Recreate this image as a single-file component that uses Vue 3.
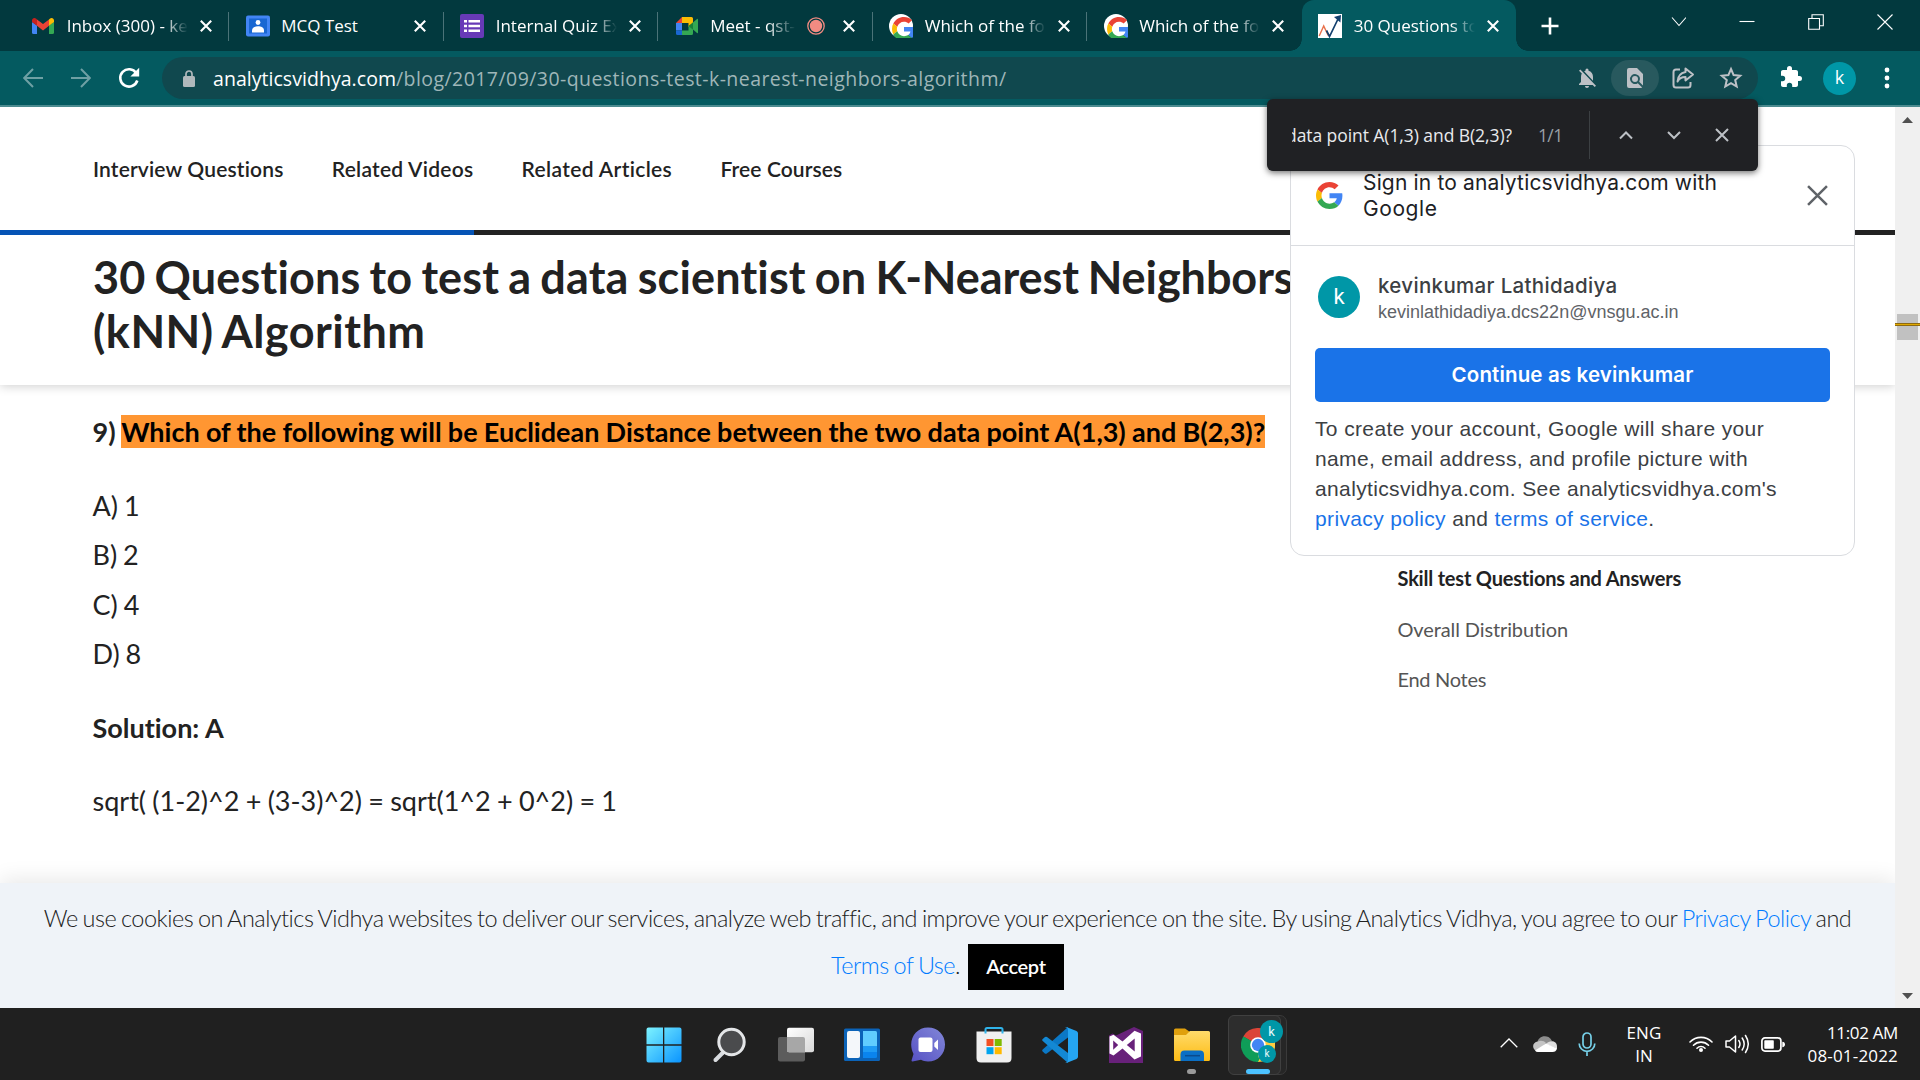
<script setup>
const googleG = '<svg viewBox="0 0 48 48"><path fill="#EA4335" d="M24 9.5c3.54 0 6.71 1.22 9.21 3.6l6.85-6.85C35.9 2.38 30.47 0 24 0 14.62 0 6.51 5.38 2.56 13.22l7.98 6.19C12.43 13.72 17.74 9.5 24 9.5z"/><path fill="#4285F4" d="M46.98 24.55c0-1.57-.15-3.09-.38-4.55H24v9.02h12.94c-.58 2.96-2.26 5.48-4.78 7.18l7.73 6c4.51-4.18 7.09-10.36 7.09-17.65z"/><path fill="#FBBC05" d="M10.53 28.59c-.48-1.45-.76-2.99-.76-4.59s.27-3.14.76-4.59l-7.98-6.19C.92 16.46 0 20.12 0 24c0 3.88.92 7.54 2.56 10.78l7.97-6.19z"/><path fill="#34A853" d="M24 48c6.48 0 11.93-2.13 15.89-5.81l-7.73-6c-2.15 1.45-4.92 2.3-8.16 2.3-6.26 0-11.57-4.22-13.47-9.91l-7.98 6.19C6.51 42.62 14.62 48 24 48z"/></svg>'
const googleTab = '<svg viewBox="0 0 24 24"><circle cx="12" cy="12" r="12" fill="#fff"/><svg x="3" y="3" width="18" height="18" viewBox="0 0 48 48">' + googleG.replace(/^<svg[^>]*>|<\/svg>$/g, '') + '</svg></svg>'
const gmail = '<svg viewBox="0 0 24 24"><path fill="#4285f4" d="M1 8v10.500q0 1.500 1.500 1.500H6v-8.500z"/><path fill="#34a853" d="M23 8v10.500q0 1.500-1.500 1.500H18v-8.500z"/><path fill="#ea4335" d="M6 5.500l6 4.600 6-4.600v6.200l-6 4.700-6-4.700z"/><path fill="#c5221f" d="M1 9V6.500C1 4 3.600 3.200 5.200 4.700L6 5.500v6.300L1 8z"/><path fill="#fbbc04" d="M23 9V6.500c0-2.500-2.600-3.300-4.200-1.800l-.8.800v6.300L23 8z"/></svg>'
const classroom = '<svg viewBox="0 0 24 24"><rect y="1.500" width="24" height="21" rx="2" fill="#4285f4"/><rect x="3" y="4.500" width="18" height="15" fill="#1967d2"/><circle cx="12" cy="8.500" r="2.400" fill="#fff"/><path fill="#fff" d="M6 18.500v-2c0-3 3-4.300 6-4.300s6 1.300 6 4.300v2z"/></svg>'
const forms = '<svg viewBox="0 0 24 24"><rect width="24" height="24" rx="2" fill="#673ab7"/><path stroke="#fff" stroke-width="2.600" d="M4 7.200h3M8.500 7.200H20M4 12h3M8.500 12H20M4 16.800h3M8.500 16.800H20"/></svg>'
const meet = '<svg viewBox="0 0 24 24"><path fill="#ea4335" d="M7 3L1 9h6z"/><path fill="#fbbc04" d="M7 3h9.500Q18 3 18 4.500V11l-4.500 2V9H7z"/><path fill="#4285f4" d="M1 9h6v7.500H1z"/><path fill="#1967d2" d="M1 16.500h6V21H2.500Q1 21 1 19.500z"/><path fill="#34a853" d="M7 16.500h6.500v-4L18 9.500v10q0 1.500-1.500 1.500H7z"/><path fill="#188038" d="M13.500 12L18 8.300v7.500z"/><path fill="#34a853" d="M18 8.500L22 5q1-.7 1 .5v13q0 1.200-1 .5l-4-3.500z"/></svg>'
const analytics = '<svg viewBox="0 0 24 24"><rect width="24" height="24" fill="#fff"/><path fill="none" stroke="#e8704a" stroke-width="1.400" d="M1.200 22L5.700 12l4.500 9.500"/><path fill="none" stroke="#123f6d" stroke-width="1.700" d="M8.500 16.500l3 6L20.500 4"/><path fill="#123f6d" d="M16 3L23 1l-.6 7.500z"/></svg>'

const tabs = [
  { icon: gmail, title: 'Inbox (300) - ke' },
  { icon: classroom, title: 'MCQ Test' },
  { icon: forms, title: 'Internal Quiz Ex' },
  { icon: meet, title: 'Meet - qst-', recording: true },
  { icon: googleTab, title: 'Which of the fo' },
  { icon: googleTab, title: 'Which of the fo' },
  { icon: analytics, title: '30 Questions to', active: true },
]
const navLinks = [
  ['Interview Questions', 190.5],
  ['Related Videos', 141.5],
  ['Related Articles', 150.5],
  ['Free Courses', 122],
]
const answers = ['A) 1', 'B) 2', 'C) 4', 'D) 8']

const taskIcons = [
  '<svg viewBox="0 0 36 36"><defs><linearGradient id="win" x1="0" y1="0" x2="1" y2="1"><stop offset="0" stop-color="#7df3ff"/><stop offset="1" stop-color="#0a94ff"/></linearGradient></defs><path fill="url(#win)" d="M2.500.500H17V17.200H.500V2.500q0-2 2-2zM18.300.500H33.500q2 0 2 2V17.200H18.300zM.500 18.700H17V35.500H2.500q-2 0-2-2zM18.300 18.700H35.500V33.500q0 2-2 2H18.300z"/></svg>',
  '<svg viewBox="0 0 36 36"><path stroke="#d9dce0" stroke-width="4" stroke-linecap="round" d="M10.500 26L3.500 33"/><circle cx="19.500" cy="15" r="12.700" fill="#4a4b4d" stroke="#e4e6e8" stroke-width="3"/></svg>',
  '<svg viewBox="0 0 36 36"><defs><linearGradient id="tv" x1="0" y1="0" x2="1" y2="1"><stop offset="0" stop-color="#fff"/><stop offset="1" stop-color="#d8d8d8"/></linearGradient></defs><rect x="0" y="10" width="27" height="24.500" rx="2" fill="#5c5c5c"/><rect x="9" y=".800" width="27" height="24.500" rx="2" fill="url(#tv)"/><path fill="#a7a7a7" d="M9 10h16q2 0 2 2v13.300H11q-2 0-2-2z"/></svg>',
  '<svg viewBox="0 0 36 36"><rect y="1.500" width="36" height="32.500" rx="1.500" fill="#0b63b8"/><rect x="3" y="4" width="13" height="27" rx="2" fill="#f4f7fa"/><path fill="#60cdff" d="M19 4h12.500q1.500 0 1.500 1.500V19H19z"/><path fill="#1e9bf5" d="M19 19h14v6H19z"/><path fill="#0a84ee" d="M19 25h14v4.500q0 1.500-1.500 1.500H19z"/></svg>',
  '<svg viewBox="0 0 36 36"><defs><linearGradient id="chat" x1="1" y1="0" x2="0" y2="1"><stop offset="0" stop-color="#8287d8"/><stop offset="1" stop-color="#5752c4"/></linearGradient></defs><path fill="url(#chat)" d="M18 .500C28 .500 35 8 35 17.500S28 34.500 18 34.500c-3 0-5-.500-7-1.700L2.500 34.500q-1 0-1-1L3.500 27C-3 14 5 .500 18 .500z"/><rect x="8.500" y="10.500" width="14" height="14.500" rx="2" fill="#fff"/><path fill="#fff" d="M24.300 16L28 12.600V23l-3.700-3.500z"/></svg>',
  '<svg viewBox="0 0 36 36"><path fill="#f0f0f0" d="M.500 4.500h35V31q0 4.500-4.500 4.500H5Q.500 35.500.500 31z"/><path fill="none" stroke="#2fb3ea" stroke-width="2" d="M9.500 6.500V2.500q0-1.500 1.500-1.500H25q1.500 0 1.500 1.500V6.500"/><path fill="#f25022" d="M10.500 12h7v7h-7z"/><path fill="#7fba00" d="M18.700 12h7v7h-7z"/><path fill="#00a4ef" d="M10.500 20.200h7v7h-7z"/><path fill="#ffb900" d="M18.700 20.200h7v7h-7z"/></svg>',
  '<svg viewBox="0 0 36 36"><path fill="#0b78c6" d="M26 0v10.500L4.800 26.500q-1 .700-2 0L.700 24.500q-1-1 0-2z"/><path fill="#1388d4" d="M.700 12L3 10q1-.700 2 0L26 26v10L.700 14q-1-1 0-2z"/><path fill="#25a5f2" d="M25 .300L34.500 4Q36 4.800 36 6.300V29.700q0 1.500-1.500 2.200L25 35.700q-1 .300-2-.700 3 1 3-2V3q0-3-3-2 1-1 2-.700z"/></svg>',
  '<svg viewBox="0 0 36 36"><path fill="#68217a" d="M1 8.500L4.500 6.500 8 8.500 26 0l9 4v32H1z"/><path fill="#fff" fill-rule="evenodd" d="M26.500 3.800L33 6.500V29.500L26.500 32.500 14.500 21.500 5.500 28.500 1.500 26.500V9.500L5.500 7.700 14.500 14.600zM26.700 11.500L18.800 18l7.900 6.500zM5.200 13.500v9.200L10.200 18z"/></svg>',
  '<svg viewBox="0 0 36 36"><path fill="#e0a00d" d="M0 3q0-1.500 1.500-1.500H11L16 5v6H0z"/><defs><linearGradient id="fold" x1="0" y1="0" x2="0" y2="1"><stop offset="0" stop-color="#ffdb6b"/><stop offset="1" stop-color="#fdbc14"/></linearGradient></defs><path fill="url(#fold)" d="M0 8H12L16 4H34.500Q36 4 36 5.500V32.500Q36 34 34.500 34H1.500Q0 34 0 32.500z"/><path fill="#0b6fc4" d="M6.500 34V27.500q0-4 4-4H26q4 0 4 4V34z"/><path stroke="#0a4a8c" stroke-width="1.500" d="M11 28.700H26"/></svg>',
]

// Spreads letters so a label takes up the given width in pixels;
// with the .words modifier only the word gaps are adjusted.
const vFit = {
  mounted(el, { value, modifiers }) {
    const diff = value - el.getBoundingClientRect().width
    const text = el.textContent
    if (modifiers.words) el.style.wordSpacing = diff / (text.split(' ').length - 1) + 'px'
    else el.style.letterSpacing = diff / text.length + 'px'
  },
}
</script>

<template>
  <div class="screen">
    <header class="tabstrip">
      <div class="tabs">
        <div v-for="(t, i) in tabs" :key="i" class="tab" :class="{ active: t.active, last: i === 5 }">
          <span class="favicon" v-html="t.icon"></span>
          <span class="title" :class="{ short: t.recording, faded: t.title !== 'MCQ Test' }">{{ t.title }}</span>
          <svg v-if="t.recording" class="rec" viewBox="0 0 18 18"><circle cx="9" cy="9" r="8.200" fill="none" stroke="#f28b82" stroke-width="1.300" /><circle cx="9" cy="9" r="6.200" fill="#f28b82" /></svg>
          <svg class="close" viewBox="0 0 12 12"><path d="M.8.8l10.400 10.400M11.200.8L.8 11.200" stroke="#fff" stroke-width="2.100" /></svg>
        </div>
      </div>
      <svg class="plus" viewBox="0 0 18 18"><path d="M9 .5v17M.5 9h17" stroke="#fff" stroke-width="2.600" /></svg>
      <div class="controls">
        <svg viewBox="0 0 16 16"><path d="M2 3.500l7 8 7-8" /></svg>
        <svg viewBox="0 0 16 16"><path d="M.5 7.500h15" /></svg>
        <svg viewBox="0 0 16 16"><path d="M.7 4.500h10.800v10.800H.7zM4 4.500V.7h11.300v11H11.500" /></svg>
        <svg viewBox="0 0 16 16"><path d="M.5.5l15 15M15.500.5l-15 15" /></svg>
      </div>
    </header>

    <div class="toolbar">
      <svg class="nav-ic back" viewBox="0 0 20 20"><path d="M20 10H1.500M10 1L1.200 10l8.800 9" fill="none" stroke="#6fa0a4" stroke-width="2" /></svg>
      <svg class="nav-ic fwd" viewBox="0 0 20 20"><path d="M0 10h18.500M10 1l8.800 9L10 19" fill="none" stroke="#6fa0a4" stroke-width="2" /></svg>
      <svg class="reload" viewBox="0 0 22 22"><path d="M18.300 6.200A8.700 8.700 0 1 0 19.300 13.500" fill="none" stroke="#fff" stroke-width="2.600" /><path d="M21.200.8v8.800h-8.800z" fill="#fff" /></svg>
      <div class="omnibox">
        <svg class="lock" viewBox="0 0 12 17"><rect y="6" width="12" height="11" rx="1.500" fill="#b0b8bb" /><path d="M3 7V4a3 3 0 0 1 6 0v3" fill="none" stroke="#b0b8bb" stroke-width="1.700" /></svg>
        <span v-fit="183" class="domain">analyticsvidhya.com</span><span v-fit="610.500" class="path">/blog/2017/09/30-questions-test-k-nearest-neighbors-algorithm/</span>
        <div class="omni-icons">
          <svg viewBox="0 0 24 24" class="oi bell"><path fill="#bdc1c6" d="M20 18.700L7.800 6.100 5.300 3.500 4 4.800l2.800 2.800C6.300 8.600 6 9.700 6 11v5l-2 2v1h13.700l2 2 1.300-1.300zM12 22c1.100 0 2-.9 2-2h-4c0 1.100.9 2 2 2zm6-7.300V11c0-3.100-1.600-5.600-4.500-6.300V4a1.500 1.500 0 0 0-3 0v.700c-.5.100-1 .3-1.400.5z" /></svg>
          <span class="oi-chip"><svg viewBox="0 0 24 24" class="oi"><path fill="#bdc1c6" fill-rule="evenodd" d="M6 2h8l6 6v11.600l-3.800-3.800a5 5 0 1 0-1.400 1.400L19.200 21.600Q18.800 22 18 22H6q-2 0-2-2V4q0-2 2-2zM12 10a3 3 0 1 1 0 6 3 3 0 1 1 0-6z" /></svg></span>
          <svg viewBox="0 0 24 24" class="oi share"><path fill="none" stroke="#bdc1c6" stroke-width="2" stroke-linejoin="round" d="M9 3.500H5Q2.500 3.500 2.500 6v13Q2.500 21.500 5 21.500H17Q19.500 21.500 19.500 19V16M14.500 2.500L22 8.500l-7.500 6v-3.500c-4 0-6.500 1.500-8 4.500.3-5 3-8.500 8-9.500z" /></svg>
          <svg viewBox="0 0 24 24" class="oi star"><path fill="none" stroke="#bdc1c6" stroke-width="2" d="M12 3l2.600 6.100 6.600.6-5 4.300 1.500 6.500-5.700-3.400-5.700 3.400L7.800 14l-5-4.300 6.600-.6z" /></svg>
        </div>
      </div>
      <svg class="puzzle" viewBox="0 0 24 24"><path fill="#fff" d="M20.500 11H19V7c0-1.100-.9-2-2-2h-4V3.500a2.500 2.500 0 0 0-5 0V5H4c-1.100 0-2 .9-2 2v3.800h1.500a2.700 2.700 0 0 1 0 5.400H2V20c0 1.100.9 2 2 2h3.800v-1.500a2.700 2.700 0 0 1 5.400 0V22H17c1.100 0 2-.9 2-2v-4h1.500a2.500 2.500 0 0 0 0-5z" /></svg>
      <span class="profile">k</span>
      <svg class="menu" viewBox="0 0 6 22"><g fill="#fff"><circle cx="3" cy="3" r="2.400" /><circle cx="3" cy="11" r="2.400" /><circle cx="3" cy="19" r="2.400" /></g></svg>
    </div>

    <div class="viewport">
      <div class="page">
        <div class="page-head">
          <nav><span v-for="n in navLinks" :key="n[0]" v-fit="n[1]">{{ n[0] }}</span></nav>
          <div class="progress"><i></i></div>
          <h1><span v-fit="782.500">30 Questions to test a data scientist on </span><span v-fit="418">K-Nearest Neighbors</span><br /><span v-fit="332.500">(kNN) Algorithm</span></h1>
        </div>
        <div class="content">
          <article>
            <p><b><span v-fit.words="28.500">9) </span><mark v-fit.words="1144">Which of the following will be Euclidean Distance between the two data point A(1,3) and B(2,3)?</mark></b></p>
            <p class="answers"><template v-for="a in answers" :key="a">{{ a }}<br /></template></p>
            <p><b>Solution: A</b></p>
            <p><span v-fit.words="524.500">sqrt( (1-2)^2 + (3-3)^2) = sqrt(1^2 + 0^2) = 1</span></p>
          </article>
          <aside>
            <div class="on"><span v-fit="283.500">Skill test Questions and Answers</span></div>
            <div><span v-fit="170.500">Overall Distribution</span></div>
            <div><span v-fit="88.500">End Notes</span></div>
          </aside>
        </div>
        <div class="cookies">
          <div class="line"><span v-fit="1807.500">We use cookies on Analytics Vidhya websites to deliver our services, analyze web traffic, and improve your experience on the site. By using Analytics Vidhya, you agree to our <a>Privacy Policy</a> and</span></div>
          <div class="line"><a v-fit="124">Terms of Use</a>. <button><span v-fit="59.500">Accept</span></button></div>
        </div>
      </div>
      <div class="scrollbar">
        <svg viewBox="0 0 11 6"><path fill="#505050" d="M0 6L5.500 0 11 6z" /></svg>
        <div class="track"><div class="thumb"></div><div class="hit"></div></div>
        <svg viewBox="0 0 11 6"><path fill="#505050" d="M0 0h11L5.500 6z" /></svg>
      </div>

      <section class="signin">
        <div class="si-head">
          <span class="glogo" v-html="googleG"></span>
          <div class="si-title"><span v-fit="354">Sign in to analyticsvidhya.com with</span><br /><span v-fit="74.500">Google</span></div>
          <svg class="si-close" viewBox="0 0 20 20"><path d="M1 1l18 18M19 1L1 19" stroke="#5f6368" stroke-width="2.400" /></svg>
        </div>
        <div class="account">
          <span class="avatar">k</span>
          <div><div class="name"><span v-fit="239.500">kevinkumar Lathidadiya</span></div><div class="mail"><span v-fit="300.500">kevinlathidadiya.dcs22n@vnsgu.ac.in</span></div></div>
        </div>
        <div class="continue"><span v-fit="242">Continue as kevinkumar</span></div>
        <div class="legal">
          <span v-fit="449">To create your account, Google will share your</span><br />
          <span v-fit="433">name, email address, and profile picture with</span><br />
          <span v-fit="462">analyticsvidhya.com. See analyticsvidhya.com's</span><br />
          <span v-fit="339.500"><a>privacy policy</a> and <a>terms of service</a>.</span>
        </div>
      </section>

      <div class="findbar">
        <div class="query"><span v-fit="226">data point A(1,3) and B(2,3)?</span></div>
        <span class="count"><span v-fit="24.500">1/1</span></span>
        <i></i>
        <svg viewBox="0 0 14 14"><path d="M1 10.500l6-6 6 6" /></svg>
        <svg viewBox="0 0 14 14"><path d="M1 4l6 6 6-6" /></svg>
        <svg viewBox="0 0 14 14"><path d="M1 1l12 12M13 1L1 13" /></svg>
      </div>
    </div>

    <footer class="taskbar">
      <div class="apps">
        <div v-for="(s, i) in taskIcons" :key="i" class="app"><span class="app-icon" v-html="s"></span><i v-if="i === 8" class="dot"></i></div>
        <div class="app">
          <div class="tile-back"></div>
          <div class="tile">
            <svg class="chrome" viewBox="0 0 48 48"><path fill="#db4437" d="M24 24L3.200 12A24 24 0 0 1 44.800 12z" /><path fill="#0f9d58" d="M24 24L24 48A24 24 0 0 1 3.200 12z" /><path fill="#ffcd40" d="M24 24L44.800 12A24 24 0 0 1 24 48z" /><path fill="#db4437" d="M24 13H45.300L44 11H24z" /><path fill="#0f9d58" d="M14.500 29.500L3.200 12l12 7zM33.500 29.500L24 48h-3l8-15z" /><circle cx="24" cy="24" r="11" fill="#fff" /><circle cx="24" cy="24" r="8.700" fill="#4285f4" /></svg>
            <span class="badge big">k</span><span class="badge small">k</span><i class="bar"></i>
          </div>
        </div>
      </div>
      <div class="tray">
        <svg class="t-up" viewBox="0 0 18 10"><path d="M.7 9.300L9 1l8.300 8.300" fill="none" stroke="#fff" stroke-width="1.300" /></svg>
        <svg class="t-cloud" viewBox="0 0 24 16"><path fill="#8d8d8d" d="M4 8A7.800 7.800 0 0 1 19 5L13 11z" /><path fill="#c4c4c4" d="M5 5.500C8 4 11 5 13 7L5 15.500C-1.500 14.500-1.500 6 5 5.500z" /><path fill="#dedede" d="M13 8C17 3.500 24 5 24 10.500V13z" /><path fill="#fff" d="M2 14.500L13 7.500l11 5Q23 16 19.500 16H5Q3 16 2 14.500z" /></svg>
        <svg class="t-mic" viewBox="0 0 18 24"><rect x="5" y="1" width="8" height="15" rx="4" fill="none" stroke="#76d0e8" stroke-width="1.700" /><path d="M1.200 11.500a7.800 7.800 0 0 0 15.600 0M9 19.500V24" fill="none" stroke="#76d0e8" stroke-width="1.700" /></svg>
        <div class="lang"><span v-fit="35">ENG</span><br /><span>IN</span></div>
        <svg class="t-wifi" viewBox="0 0 24 17"><g fill="none" stroke="#fff" stroke-width="1.600" stroke-linecap="round"><path d="M1 7a15.500 15.500 0 0 1 22 0M4.500 10.200a10.600 10.600 0 0 1 15 0M8 13.200a5.700 5.700 0 0 1 8 0" /></g><circle cx="12" cy="15" r="2" fill="#fff" /></svg>
        <svg class="t-vol" viewBox="0 0 24 20"><g fill="none" stroke="#fff" stroke-width="1.500" stroke-linecap="round" stroke-linejoin="round"><path d="M1 7h3.500L10.500 2v16L4.500 13H1zM13.800 6.500q2.400 3.500 0 7M17.200 4q4 6 0 12M20.500 1.500q5.500 8.500 0 17" /></g></svg>
        <svg class="t-bat" viewBox="0 0 24 15"><rect x=".9" y=".9" width="19" height="13.200" rx="3" fill="none" stroke="#fff" stroke-width="1.700" /><rect x="3.300" y="3.300" width="9.500" height="8.400" rx=".8" fill="#fff" /><path d="M21.300 4.800q2.700.3 2.700 2.700t-2.700 2.700z" fill="#fff" /></svg>
        <div class="clock"><span v-fit="71">11:02 AM</span><br /><span v-fit="90.500">08-01-2022</span></div>
      </div>
    </footer>
  </div>
</template>

<style>
body { margin: 0; overflow: hidden; background: #fff; }
.favicon svg, .glogo svg, .app-icon svg { display: block; width: 100%; height: 100%; }
</style>

<style scoped>
.screen { width: 1920px; height: 1080px; display: flex; flex-direction: column; overflow: hidden; font-family: "Open Sans", sans-serif; }
.screen svg { flex: none; display: block; }
.screen span { white-space: pre; }

.tabstrip { height: 51px; background: #02393e; display: flex; flex: none; }
.tabs { display: flex; padding-left: 14.500px; }
.tab { position: relative; width: 214.500px; height: 51px; box-sizing: border-box; padding: 0 17.500px 0 16.700px; display: flex; align-items: center; color: #fff; font-size: 17px; }
.tab::after { content: ""; position: absolute; right: 0; top: 12px; width: 1px; height: 29px; background: #4b7378; }
.tab.last::after { display: none; }
.tab.active { background: #045a60; border-radius: 12px 12px 0 0; }
.tab.active::before { content: ""; position: absolute; left: -12px; bottom: 0; width: 12px; height: 12px; background: radial-gradient(circle at 0 0, transparent 11.500px, #045a60 12px); }
.tab.active::after { left: 100%; right: auto; top: auto; bottom: 0; width: 12px; height: 12px; background: radial-gradient(circle at 100% 0, transparent 11.500px, #045a60 12px); }
.favicon { width: 24px; height: 24px; flex: none; }
.title { margin-left: 11.500px; width: 121px; height: 26px; line-height: 26px; flex: none; }
.title.faded { -webkit-mask-image: linear-gradient(90deg, #000 80%, transparent 100%); mask-image: linear-gradient(90deg, #000 80%, transparent 100%); }
.title.short { width: 86px; margin-right: 10.500px; -webkit-mask-image: linear-gradient(90deg, #000 66%, transparent 100%); mask-image: linear-gradient(90deg, #000 66%, transparent 100%); }
.rec { width: 18px; height: 18px; }
.close { width: 12px; height: 12px; margin-left: auto; }
.plus { width: 18px; height: 18px; margin: 17px 0 0 24.500px; }
.controls { margin-left: auto; padding: 14px 27px 0 0; display: flex; gap: 53px; }
.controls svg { width: 16px; height: 16px; fill: none; stroke: #fff; stroke-width: 1.100; }

.toolbar { height: 54px; border-bottom: 2px solid #4c8b90; background: #045a60; display: flex; flex: none; align-items: center; }
.nav-ic { width: 20px; height: 20px; }
.back { margin-left: 23px; }
.fwd { margin-left: 28px; }
.reload { width: 22px; height: 22px; margin-left: 27px; }
.omnibox { margin-left: 22px; width: 1596px; height: 42px; border-radius: 21px; background: #10484e; display: flex; align-items: center; font-size: 19.500px; box-sizing: border-box; padding-left: 21px; }
.lock { width: 12px; height: 17px; margin-right: 18px; }
.domain { color: #fff; }
.path { color: #9fb6b8; }
.omni-icons { margin-left: auto; display: flex; align-items: center; padding-right: 15px; }
.oi { width: 24px; height: 24px; }
.bell { margin-right: 12px; }
.oi-chip { width: 48px; height: 36px; border-radius: 18px; background: #28595e; display: flex; align-items: center; justify-content: center; }
.share { margin-left: 12px; }
.star { margin-left: 24px; }
.puzzle { width: 24px; height: 24px; margin-left: 21px; margin-top: -2px; }
.profile { width: 33px; height: 33px; line-height: 31px; margin-left: 20px; border-radius: 50%; background: #0097a7; color: #fff; text-align: center; font-size: 18px; }
.menu { width: 6px; height: 22px; margin-left: 28px; }

.viewport { position: relative; flex: none; height: 901px; display: flex; }
.page { width: 1895px; display: flex; flex-direction: column; font-family: Lato, sans-serif; color: #222; background: #fff; font-variant-ligatures: no-common-ligatures; }
.page-head { height: 278px; flex: none; box-shadow: 0 1px 10px rgba(0, 0, 0, .2); position: relative; background: #fff; clip-path: inset(0 0 -14px 0); }
nav { height: 123px; box-sizing: border-box; padding: 48px 0 0 93px; display: flex; gap: 48.300px; font-size: 21px; line-height: 28px; font-weight: 600; white-space: nowrap; }
.progress { height: 5px; background: #222; }
.progress i { display: block; width: 474px; height: 5px; background: #0654b5; }
h1 { margin: 0; padding: 15px 0 0 93px; font-size: 45px; line-height: 54px; font-weight: 700; white-space: nowrap; word-spacing: -2px; }
.content { display: flex; flex: 1; font-size: 27px; line-height: 49.500px; }
article { padding: 22px 0 0 92.500px; width: 1397.500px; flex: none; box-sizing: border-box; white-space: nowrap; }
article p { margin: 0 0 24px; }
.answers { word-spacing: -1px; }
article b { font-weight: 700; }
mark { background: #ff9632; color: #000; }
aside { padding-top: 169px; font-size: 20px; line-height: 50px; color: #555; }
aside .on { color: #222; font-weight: 700; margin: -1px 0 1px; }
.cookies { height: 125px; box-sizing: border-box; padding-top: 12px; background: #eff3f8; color: #222; font-size: 23.500px; font-weight: 300; text-align: center; box-shadow: 0 -4px 20px rgba(0, 0, 0, .09); position: relative; clip-path: inset(-28px 0 0 0); word-spacing: -1px; }
.line { height: 47px; line-height: 47px; white-space: nowrap; }
.cookies a { color: #007bff; display: inline; }
button { border: 0; background: #000; color: #fff; font: 600 20px/44px Lato, sans-serif; width: 96px; height: 46px; padding: 0 0 2px; margin-left: 2px; vertical-align: baseline; }

.scrollbar { width: 25px; background: #f0f0f0; display: flex; flex-direction: column; align-items: center; padding: 10px 0 9px; box-sizing: border-box; }
.scrollbar svg { width: 11px; height: 6px; }
.track { flex: 1; width: 25px; padding-top: 191px; }
.thumb { width: 21px; height: 26px; margin-left: 2px; background: #c1c1c1; }
.hit { height: 1px; margin-top: -17px; background: #dfa800; border: 1px solid #8f6a10; border-width: 1px 0; position: relative; }

.signin { position: absolute; left: 1290px; top: 38px; width: 565px; height: 411px; box-sizing: border-box; border: 1px solid #dadce0; border-radius: 14px; background: #fff; color: #202124; font-family: Inter, sans-serif; }
.si-head { height: 100px; box-sizing: border-box; border-bottom: 1px solid #dadce0; padding: 24px 26px 0 25px; display: flex; }
.glogo { width: 27px; height: 27px; margin: 12px 20px 0 0; }
.si-title { font-size: 21px; line-height: 26px; font-weight: 400; }
.si-close { width: 21px; height: 21px; margin: 15px 0 0 auto; }
.account { display: flex; padding: 30px 0 0 27px; height: 102px; box-sizing: border-box; }
.avatar { width: 42px; height: 42px; border-radius: 50%; background: #0097a7; color: #fff; font: 22px/41px Roboto, sans-serif; text-align: center; margin-right: 18px; }
.name { font-size: 20.500px; line-height: 26px; margin-top: -3px; color: #3c4043; font-weight: 500; }
.mail { font: 18px/27px "Liberation Sans", sans-serif; color: #5f6368; }
.continue { margin-left: 24px; width: 515px; height: 54px; line-height: 54px; border-radius: 5px; background: #1a73e8; color: #fff; text-align: center; font-size: 20.500px; font-weight: 600; }
.legal { margin: 12px 0 0 24px; font: 21px/30px "Liberation Sans", sans-serif; color: #3c4043; white-space: nowrap; }
.legal a { color: #1a73e8; }

.findbar { position: absolute; left: 1267px; top: -8px; width: 491px; height: 72px; border-radius: 6px; background: #202124; box-shadow: 0 2px 6px rgba(0, 0, 0, .55); display: flex; align-items: center; color: #e8eaed; font-size: 17.500px; }
.query { margin-left: 25px; width: 220px; overflow: hidden; display: flex; justify-content: flex-end; white-space: nowrap; }
.count { margin-left: 26px; width: 26px; color: #9aa0a6; }
.findbar i { margin-left: 25px; width: 1px; height: 48px; background: #3c4043; }
.findbar svg { width: 14px; height: 14px; margin-left: 34px; fill: none; stroke: #bdc1c6; stroke-width: 2; }
.findbar i + svg { margin-left: 29px; }

.taskbar { height: 72px; flex: none; background: #202020; display: flex; color: #fff; }
.apps { display: flex; padding-left: 630.500px; }
.app { width: 66px; height: 72px; position: relative; display: flex; justify-content: center; }
.app-icon { width: 36px; height: 36px; margin-top: 19px; }
.dot { position: absolute; left: 28px; top: 61px; width: 9px; height: 5px; border-radius: 3px; background: #9a9a9a; }
.tile-back { position: absolute; left: 12px; top: 7px; width: 50px; height: 60px; box-sizing: border-box; border: 1px solid #3a3a3a; border-radius: 7px; background: #262626; }
.tile { position: absolute; left: 3.500px; top: 7px; width: 53px; height: 60px; box-sizing: border-box; border: 1px solid #404040; border-radius: 6px; background: #2d2d2d; }
.chrome { width: 34px; height: 34px; margin: 12px 0 0 12px; }
.badge { position: absolute; border-radius: 50%; background: #0097a7; color: #e9fbfc; text-align: center; font-family: Roboto, sans-serif; }
.big { left: 31px; top: 4px; width: 23px; height: 23px; font-size: 13px; line-height: 23px; }
.small { left: 29px; top: 29px; width: 18px; height: 18px; font-size: 10px; line-height: 18px; }
.bar { position: absolute; left: 17px; top: 53px; width: 24px; height: 5px; border-radius: 3px; background: #4cc2ff; }
.tray { margin-left: auto; display: flex; padding-right: 22px; font-size: 17px; line-height: 23px; white-space: nowrap; }
.t-up { width: 18px; height: 10px; margin-top: 30px; }
.t-cloud { width: 24px; height: 16px; margin: 28px 0 0 15px; }
.t-mic { width: 18px; height: 24px; margin: 24px 0 0 21px; }
.lang { width: 35px; margin: 13px 0 0 30.500px; text-align: center; }
.t-wifi { width: 24px; height: 17px; margin: 27px 0 0 27.500px; }
.t-vol { width: 24px; height: 20px; margin: 26px 0 0 12px; }
.t-bat { width: 24px; height: 15px; margin: 28.500px 0 0 12px; }
.clock { margin: 12.500px 0 0 22.500px; text-align: right; }
</style>
